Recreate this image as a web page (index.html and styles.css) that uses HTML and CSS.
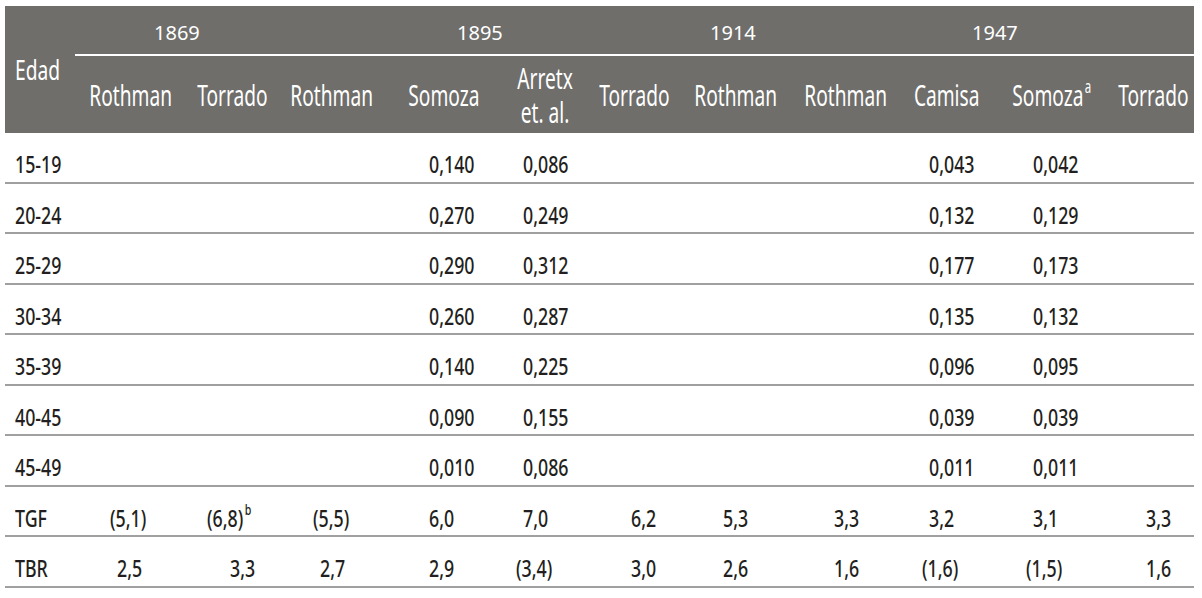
FILE: index.html
```html
<!DOCTYPE html>
<html lang="es">
<head>
<meta charset="utf-8">
<title>Tasas de fecundidad</title>
<link rel="stylesheet" href="styles.css">
</head>
<body>
<table class="tbl">
  <colgroup>
    <col class="w0"><col class="w1"><col class="w2"><col class="w3"><col class="w4"><col class="w5">
    <col class="w6"><col class="w7"><col class="w8"><col class="w9"><col class="w10"><col class="w11">
  </colgroup>
  <thead>
    <tr class="years">
      <th class="edad" rowspan="2"><span class="t">Edad</span></th>
      <th colspan="2" class="y1869">1869</th>
      <th colspan="3" class="y1895">1895</th>
      <th colspan="3" class="y1914">1914</th>
      <th colspan="3" class="y1947">1947</th>
    </tr>
    <tr class="names">
      <th><span class="t">Rothman</span></th>
      <th><span class="t">Torrado</span></th>
      <th><span class="t">Rothman</span></th>
      <th><span class="t">Somoza</span></th>
      <th><span class="t">Arretx<br>et. al.</span></th>
      <th><span class="t">Torrado</span></th>
      <th><span class="t">Rothman</span></th>
      <th><span class="t">Rothman</span></th>
      <th><span class="t">Camisa</span></th>
      <th><span class="t">Somoza<sup>a</sup></span></th>
      <th><span class="t">Torrado</span></th>
    </tr>
  </thead>
  <tbody>
    <tr><td><span class="t">15-19</span></td><td></td><td></td><td></td><td><span class="t">0,140</span></td><td><span class="t">0,086</span></td><td></td><td></td><td></td><td><span class="t">0,043</span></td><td><span class="t">0,042</span></td><td></td></tr>
    <tr><td><span class="t">20-24</span></td><td></td><td></td><td></td><td><span class="t">0,270</span></td><td><span class="t">0,249</span></td><td></td><td></td><td></td><td><span class="t">0,132</span></td><td><span class="t">0,129</span></td><td></td></tr>
    <tr><td><span class="t">25-29</span></td><td></td><td></td><td></td><td><span class="t">0,290</span></td><td><span class="t">0,312</span></td><td></td><td></td><td></td><td><span class="t">0,177</span></td><td><span class="t">0,173</span></td><td></td></tr>
    <tr><td><span class="t">30-34</span></td><td></td><td></td><td></td><td><span class="t">0,260</span></td><td><span class="t">0,287</span></td><td></td><td></td><td></td><td><span class="t">0,135</span></td><td><span class="t">0,132</span></td><td></td></tr>
    <tr><td><span class="t">35-39</span></td><td></td><td></td><td></td><td><span class="t">0,140</span></td><td><span class="t">0,225</span></td><td></td><td></td><td></td><td><span class="t">0,096</span></td><td><span class="t">0,095</span></td><td></td></tr>
    <tr><td><span class="t">40-45</span></td><td></td><td></td><td></td><td><span class="t">0,090</span></td><td><span class="t">0,155</span></td><td></td><td></td><td></td><td><span class="t">0,039</span></td><td><span class="t">0,039</span></td><td></td></tr>
    <tr><td><span class="t">45-49</span></td><td></td><td></td><td></td><td><span class="t">0,010</span></td><td><span class="t">0,086</span></td><td></td><td></td><td></td><td><span class="t">0,011</span></td><td><span class="t">0,011</span></td><td></td></tr>
    <tr><td><span class="t">TGF</span></td><td class="par"><span class="t">(5,1)</span></td><td class="par far"><span class="t">(6,8)<sup>b</sup></span></td><td class="par"><span class="t">(5,5)</span></td><td><span class="t">6,0</span></td><td><span class="t">7,0</span></td><td><span class="t">6,2</span></td><td><span class="t">5,3</span></td><td><span class="t">3,3</span></td><td><span class="t">3,2</span></td><td><span class="t">3,1</span></td><td><span class="t">3,3</span></td></tr>
    <tr><td><span class="t">TBR</span></td><td><span class="t">2,5</span></td><td><span class="t">3,3</span></td><td><span class="t">2,7</span></td><td><span class="t">2,9</span></td><td class="par"><span class="t">(3,4)</span></td><td><span class="t">3,0</span></td><td><span class="t">2,6</span></td><td><span class="t">1,6</span></td><td class="par"><span class="t">(1,6)</span></td><td class="par"><span class="t">(1,5)</span></td><td><span class="t">1,6</span></td></tr>
  </tbody>
</table>
</body>
</html>
```

FILE: styles.css
```css
html, body {
  margin: 0;
  padding: 0;
  background: #ffffff;
}

body {
  padding: 6px 0 0 5px;
}

.tbl {
  border-collapse: separate;
  border-spacing: 0;
  table-layout: fixed;
  width: 1189px;
  font-family: "Noto Sans", "Open Sans", sans-serif;
  color: #231f20;
}

.w0 { width: 70px; }
.w1 { width: 111px; }
.w2 { width: 92px; }
.w3 { width: 108px; }
.w4 { width: 115px; }
.w5 { width: 88px; }
.w6 { width: 91px; }
.w7 { width: 111px; }
.w8 { width: 110px; }
.w9 { width: 91px; }
.w10 { width: 120px; }
.w11 { width: 82px; }

.t {
  display: inline-block;
  white-space: nowrap;
  text-indent: 0;
}

.tbl thead th {
  background: #6f6e6b;
  color: #ffffff;
  font-weight: normal;
  padding: 0;
}

/* "Edad" */
.tbl thead th.edad {
  text-align: left;
  vertical-align: middle;
  padding-left: 10px;
  font-size: 27px;
  line-height: 32px;
}

.edad .t {
  transform: scaleX(0.71);
  transform-origin: left center;
}

/* year row */
.years th:not(.edad) {
  height: 24px;
  padding: 15px 0 9px 0;
  font-size: 20px;
  line-height: 24px;
  text-align: left;
  vertical-align: top;
  border-bottom: 2px solid #ffffff;
}

.tbl thead th.y1869 { padding-left: 79px; }
.tbl thead th.y1895 { padding-left: 179px; }
.tbl thead th.y1914 { padding-left: 121px; }
.tbl thead th.y1947 { padding-left: 71px; }

/* author row */
.names th {
  height: 77px;
  padding-top: 2px;
  font-size: 29px;
  line-height: 34px;
  text-align: center;
  vertical-align: middle;
}

.names .t {
  margin: 0 -40px;
  transform: scaleX(0.66);
  transform-origin: center center;
}

.names sup {
  font-size: 0.6em;
  line-height: 0;
  vertical-align: 0;
  position: relative;
  top: -0.7em;
  margin-left: 2px;
}

/* body */
.tbl tbody td {
  height: 28px;
  padding: 17px 0 3.5px 0;
  line-height: 28px;
  font-size: 24px;
  font-weight: 500;
  text-align: left;
  vertical-align: top;
  border-bottom: 2px solid #a0a0a0;
  white-space: nowrap;
}

.tbl tbody .t {
  transform: scaleX(0.74);
  transform-origin: left center;
}

.tbl tbody sup {
  font-size: 0.6em;
  line-height: 0;
  vertical-align: 0;
  position: relative;
  top: -0.8em;
  margin-left: 2px;
}

.tbl tbody td:nth-child(1) { padding-left: 10px; }
.tbl tbody td:nth-child(2) { padding-left: 42px; }
.tbl tbody td:nth-child(3) { padding-left: 44px; }
.tbl tbody td:nth-child(4) { padding-left: 42px; }
.tbl tbody td:nth-child(5) { padding-left: 43px; }
.tbl tbody td:nth-child(6) { padding-left: 22px; }
.tbl tbody td:nth-child(7) { padding-left: 42px; }
.tbl tbody td:nth-child(8) { padding-left: 43px; }
.tbl tbody td:nth-child(9) { padding-left: 43px; }
.tbl tbody td:nth-child(10) { padding-left: 28px; }
.tbl tbody td:nth-child(11) { padding-left: 41px; }
.tbl tbody td:nth-child(12) { padding-left: 34px; }

.tbl tbody td.par { text-indent: -7px; }
.tbl tbody td.far { text-indent: -23px; }
```
